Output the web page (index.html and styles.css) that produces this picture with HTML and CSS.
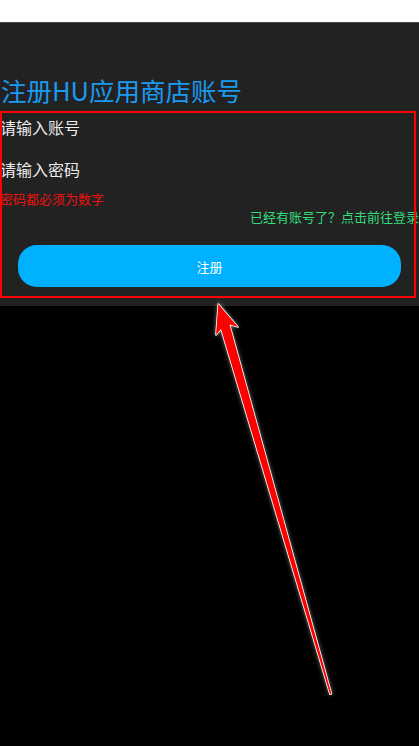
FILE: index.html
```html
<!DOCTYPE html>
<html lang="zh-CN">
<head>
<meta charset="utf-8">
<title>注册HU应用商店账号</title>
<link rel="stylesheet" href="styles.css">
</head>
<body>
<div class="statusbar"></div>
<main class="panel">
  <h1 class="title">注册HU应用商店账号</h1>
  <section class="form">
    <div class="input">请输入账号</div>
    <div class="input">请输入密码</div>
    <div class="error">密码都必须为数字</div>
    <div class="login-link">已经有账号了？点击前往登录</div>
    <button class="submit" type="button">注册</button>
  </section>
</main>
<svg class="annotation" width="419" height="746" viewBox="0 0 419 746" aria-hidden="true">
  <polygon class="arrow" points="218.3,304 238,327 229.5,324.5 331.4,693.8 330,694.2 221,329 216,335"/>
</svg>
</body>
</html>
```
FILE: styles.css
```css
html, body {
  margin: 0;
  padding: 0;
  background: #000;
}
body {
  position: relative;
  min-height: 746px;
  font-family: "Noto Sans CJK SC", "Noto Sans", sans-serif;
}
.statusbar {
  height: 22px;
  background: #fff;
}
.panel {
  background: #222222;
  border-top: 1px solid #4a4a4a;
  padding: 51px 0 8px;
}
.title {
  margin: 0;
  font-size: 25.5px;
  font-weight: 400;
  line-height: 32px;
  color: #1a9af0;
  padding-left: 1px;
}
.form {
  position: relative;
  margin-top: 5px;
  padding-bottom: 11px;
}
.form::after {
  content: "";
  position: absolute;
  top: 0;
  left: 0;
  right: 3px;
  bottom: 0;
  border: 2px solid #ff0000;
  pointer-events: none;
}
.input {
  font-size: 16px;
  line-height: 33px;
  color: #ececec;
}
.input + .input {
  margin-top: 9px;
}
.error {
  margin-top: 4px;
  font-size: 13px;
  line-height: 18px;
  color: #f01010;
}
.login-link {
  font-size: 13px;
  line-height: 18px;
  color: #33dd7d;
  text-align: right;
  white-space: nowrap;
}
.submit {
  display: block;
  box-sizing: border-box;
  width: calc(100% - 36px);
  height: 42px;
  margin: 19px 18px 0;
  border: none;
  border-radius: 19px;
  background: #00b1ff;
  color: #fff;
  font-family: inherit;
  font-size: 13px;
  padding: 0;
}
.annotation {
  position: absolute;
  top: 0;
  left: 0;
  pointer-events: none;
  filter: drop-shadow(0 0 2px rgba(255, 255, 255, 0.45));
}
.arrow {
  fill: #ff0000;
  stroke: #ffffff;
  stroke-width: 1.6;
  stroke-linejoin: round;
  paint-order: stroke;
}
```
